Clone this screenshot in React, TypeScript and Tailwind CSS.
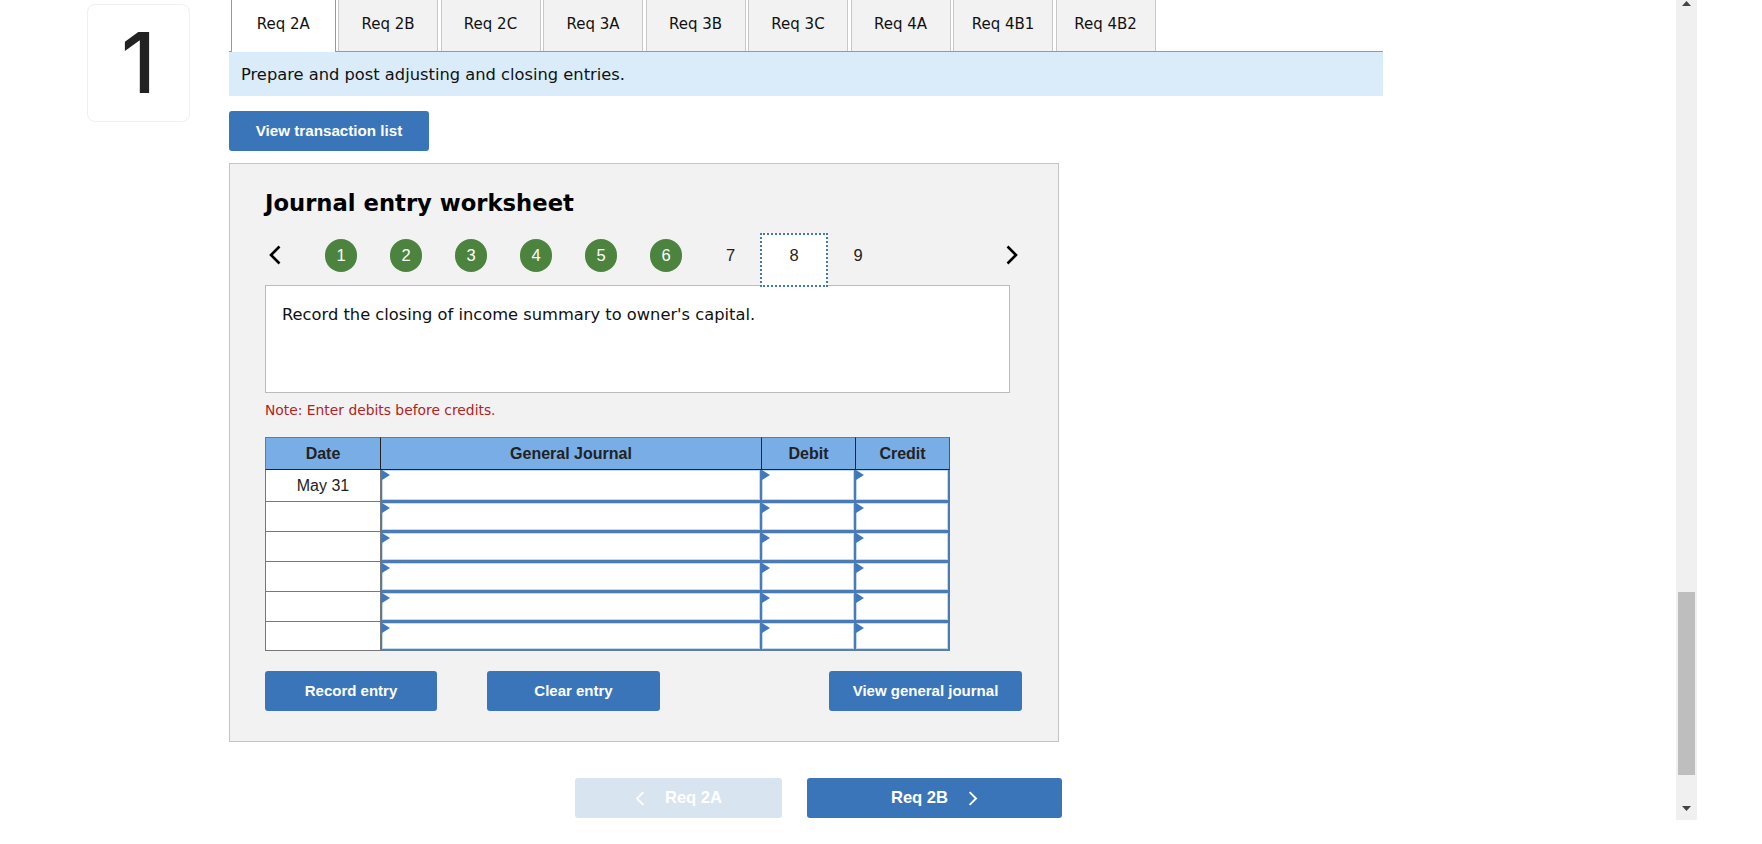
const tabs = ["Req 2B", "Req 2C", "Req 3A", "Req 3B", "Req 3C", "Req 4A", "Req 4B1", "Req 4B2"];
const doneSteps = ["1", "2", "3", "4", "5", "6"];
const rowHeights = ["h-[32px]", "h-[30px]", "h-[30px]", "h-[30px]", "h-[30px]", "h-[29px]"];

const verdana = "font-['DejaVu_Sans','Verdana',sans-serif]";
const arial = "font-['Liberation_Sans','Arial',sans-serif]";

const Chevron = ({ left, className }: { left?: boolean; className: string }) => (
  <svg viewBox="0 0 12 20" fill="none" stroke="currentColor" className={className}>
    <path d={left ? "M10.5 1.5 2 10l8.5 8.5" : "M1.5 1.5 10 10l-8.5 8.5"} strokeWidth="2.6" />
  </svg>
);

const ActionButton = ({ label, className }: { label: string; className: string }) => (
  <button className={`h-10 rounded-[3px] bg-[#3a75b9] pt-px text-[15px] font-bold text-white ${arial} ${className}`}>
    {label}
  </button>
);

const EntryCell = ({ first, top, last }: { first?: boolean; top?: boolean; last?: boolean }) => (
  <td
    className={`relative border-b-[2px] border-r-[2px] border-[#4a7bb5] bg-white p-0 shadow-[inset_0_0_0_1px_#c5d9ee] ${
      last ? "border-b-[#5f7f9f]" : ""
    } ${first ? "border-l" : ""} ${top ? "" : "border-t"}`}
  >
    <span className="absolute left-0 top-0 h-0 w-0 border-y-[5px] border-l-[8px] border-y-transparent border-l-[#3f79bd]" />
  </td>
);

const JournalTable = () => (
  <table className={`w-[685px] table-fixed border-separate border-spacing-0 ${arial}`}>
    <colgroup>
      <col className="w-[116px]" />
      <col className="w-[381px]" />
      <col className="w-[94px]" />
      <col className="w-[94px]" />
    </colgroup>
    <thead>
      <tr className="h-[33px] bg-[#78ade6] text-[16px] font-bold text-[#222]">
        <th className="border border-[#777] border-b-[#222] border-r-[#222] p-0">Date</th>
        <th className="border-y border-r border-[#222] border-t-[#777] p-0">General Journal</th>
        <th className="border-y border-r border-[#222] border-t-[#777] p-0">Debit</th>
        <th className="border-y border-r border-[#222] border-t-[#777] border-r-[#555] p-0">Credit</th>
      </tr>
    </thead>
    <tbody>
      {rowHeights.map((height, i) => (
        <tr key={i} className={height}>
          <td className="border-x border-b border-[#777] bg-white p-0 text-center text-[16px] text-[#222]">
            {i === 0 ? "May 31" : ""}
          </td>
          <EntryCell first top={i === 0} last={i === 5} />
          <EntryCell top={i === 0} last={i === 5} />
          <EntryCell top={i === 0} last={i === 5} />
        </tr>
      ))}
    </tbody>
  </table>
);

const StepNav = () => (
  <div className={`mt-[14px] flex h-[54px] items-start pt-[6px] text-[16.5px] ${arial}`}>
    <Chevron left className="ml-[4px] mt-[6px] h-[20px] w-[12px] text-black" />
    <div className="ml-[27.5px] flex items-start">
      {doneSteps.map((step) => (
        <div key={step} className="flex w-[65px] justify-center">
          <span className="flex h-[33px] w-[32px] items-center justify-center rounded-full bg-[#4c843f] text-white">
            {step}
          </span>
        </div>
      ))}
      <span className="w-[64px] text-center leading-[33px] text-[#222]">7</span>
      <span className="relative z-10 -ml-[2.5px] -mr-[2.5px] -mt-[6px] flex h-[54px] w-[68px] items-center justify-center border-2 border-dotted border-[#3f78bd] bg-white pb-[10px] text-[#222]">
        8
      </span>
      <span className="w-[65px] text-center leading-[33px] text-[#222]">9</span>
    </div>
    <Chevron className="ml-[115px] mt-[6px] h-[20px] w-[12px] text-black" />
  </div>
);

const Worksheet = () => (
  <section className="mt-[12px] h-[579px] w-[830px] border border-[#c4c4c4] bg-[#f2f2f2] pl-[35px] pt-[23px]">
    <h2 className={`h-[32px] text-[22.7px] font-bold leading-[32px] text-black ${verdana}`}>
      Journal entry worksheet
    </h2>
    <StepNav />
    <div className={`-mt-[2px] h-[108px] w-[745px] border border-[#bbb] bg-white pl-[16px] pt-[16px] text-[16.3px] leading-[26px] text-[#111] ${verdana}`}>
      Record the closing of income summary to owner's capital.
    </div>
    <p className={`mt-[7px] h-[20px] text-[13.85px] leading-[20px] text-[#b22222] ${verdana}`}>
      Note: Enter debits before credits.
    </p>
    <div className="mt-[17px]">
      <JournalTable />
    </div>
    <div className="mt-[20px] flex">
      <ActionButton label="Record entry" className="w-[172px]" />
      <ActionButton label="Clear entry" className="ml-[50px] w-[173px]" />
      <ActionButton label="View general journal" className="ml-[169px] w-[193px]" />
    </div>
  </section>
);

export default function App() {
  return (
    <div className="flex h-[844px] w-[1762px] overflow-hidden bg-white">
      <div className="ml-[87px] mt-[4px] flex h-[118px] w-[103px] shrink-0 items-center justify-center rounded-[8px] border border-[#f0f0f0] bg-white">
        <span className="font-['Inter',sans-serif] text-[84px] font-medium leading-none text-[#222]">1</span>
      </div>

      <main className="ml-[39px] w-[1154px] shrink-0">
        <nav className={`flex h-[52px] gap-[2.5px] border-b border-[#999] pl-[2px] text-[15px] text-[#111] ${verdana}`}>
          <div className="flex h-[52px] w-[104.5px] items-start justify-center border-x border-[#999] bg-white pt-[13px]">
            Req 2A
          </div>
          {tabs.map((tab) => (
            <div
              key={tab}
              className="flex h-[51px] w-[100px] items-start justify-center border-x border-[#c8c8c8] bg-[#f2f2f2] pt-[13px]"
            >
              {tab}
            </div>
          ))}
        </nav>
        <div className={`flex h-[44px] items-center bg-[#daecfa] pl-[12px] pt-[2px] text-[16.3px] text-[#111] ${verdana}`}>
          Prepare and post adjusting and closing entries.
        </div>
        <button className={`mt-[15px] block h-[40px] w-[200px] rounded-[3px] bg-[#3a75b9] pt-px text-[15.2px] font-bold text-white ${arial}`}>
          View transaction list
        </button>

        <Worksheet />

        <div className={`ml-[346px] mt-[36px] flex gap-[20px] text-[16.6px] font-bold text-white ${arial}`}>
          <button className="flex h-10 w-[207px] items-center justify-center gap-[20px] rounded-[3px] bg-[#d9e4f1]">
            <Chevron left className="h-[15px] w-[10px]" />
            Req 2A
          </button>
          <button className="ml-[5px] flex h-10 w-[255px] items-center justify-center gap-[20px] rounded-[3px] bg-[#3a75b9]">
            Req 2B
            <Chevron className="h-[15px] w-[10px]" />
          </button>
        </div>
      </main>

      <aside className="ml-[293px] flex h-[820px] w-[21px] shrink-0 flex-col items-center bg-[#f0f0f0]">
        <svg viewBox="0 0 9 5" className="mt-[1px] h-[5px] w-[9px] fill-[#444]">
          <path d="M4.5 0 9 5H0z" />
        </svg>
        <div className="mt-[586px] h-[183px] w-[17px] bg-[#bebebe]" />
        <svg viewBox="0 0 9 5" className="mt-[31px] h-[5px] w-[9px] fill-[#444]">
          <path d="M0 0h9L4.5 5z" />
        </svg>
      </aside>
    </div>
  );
}
